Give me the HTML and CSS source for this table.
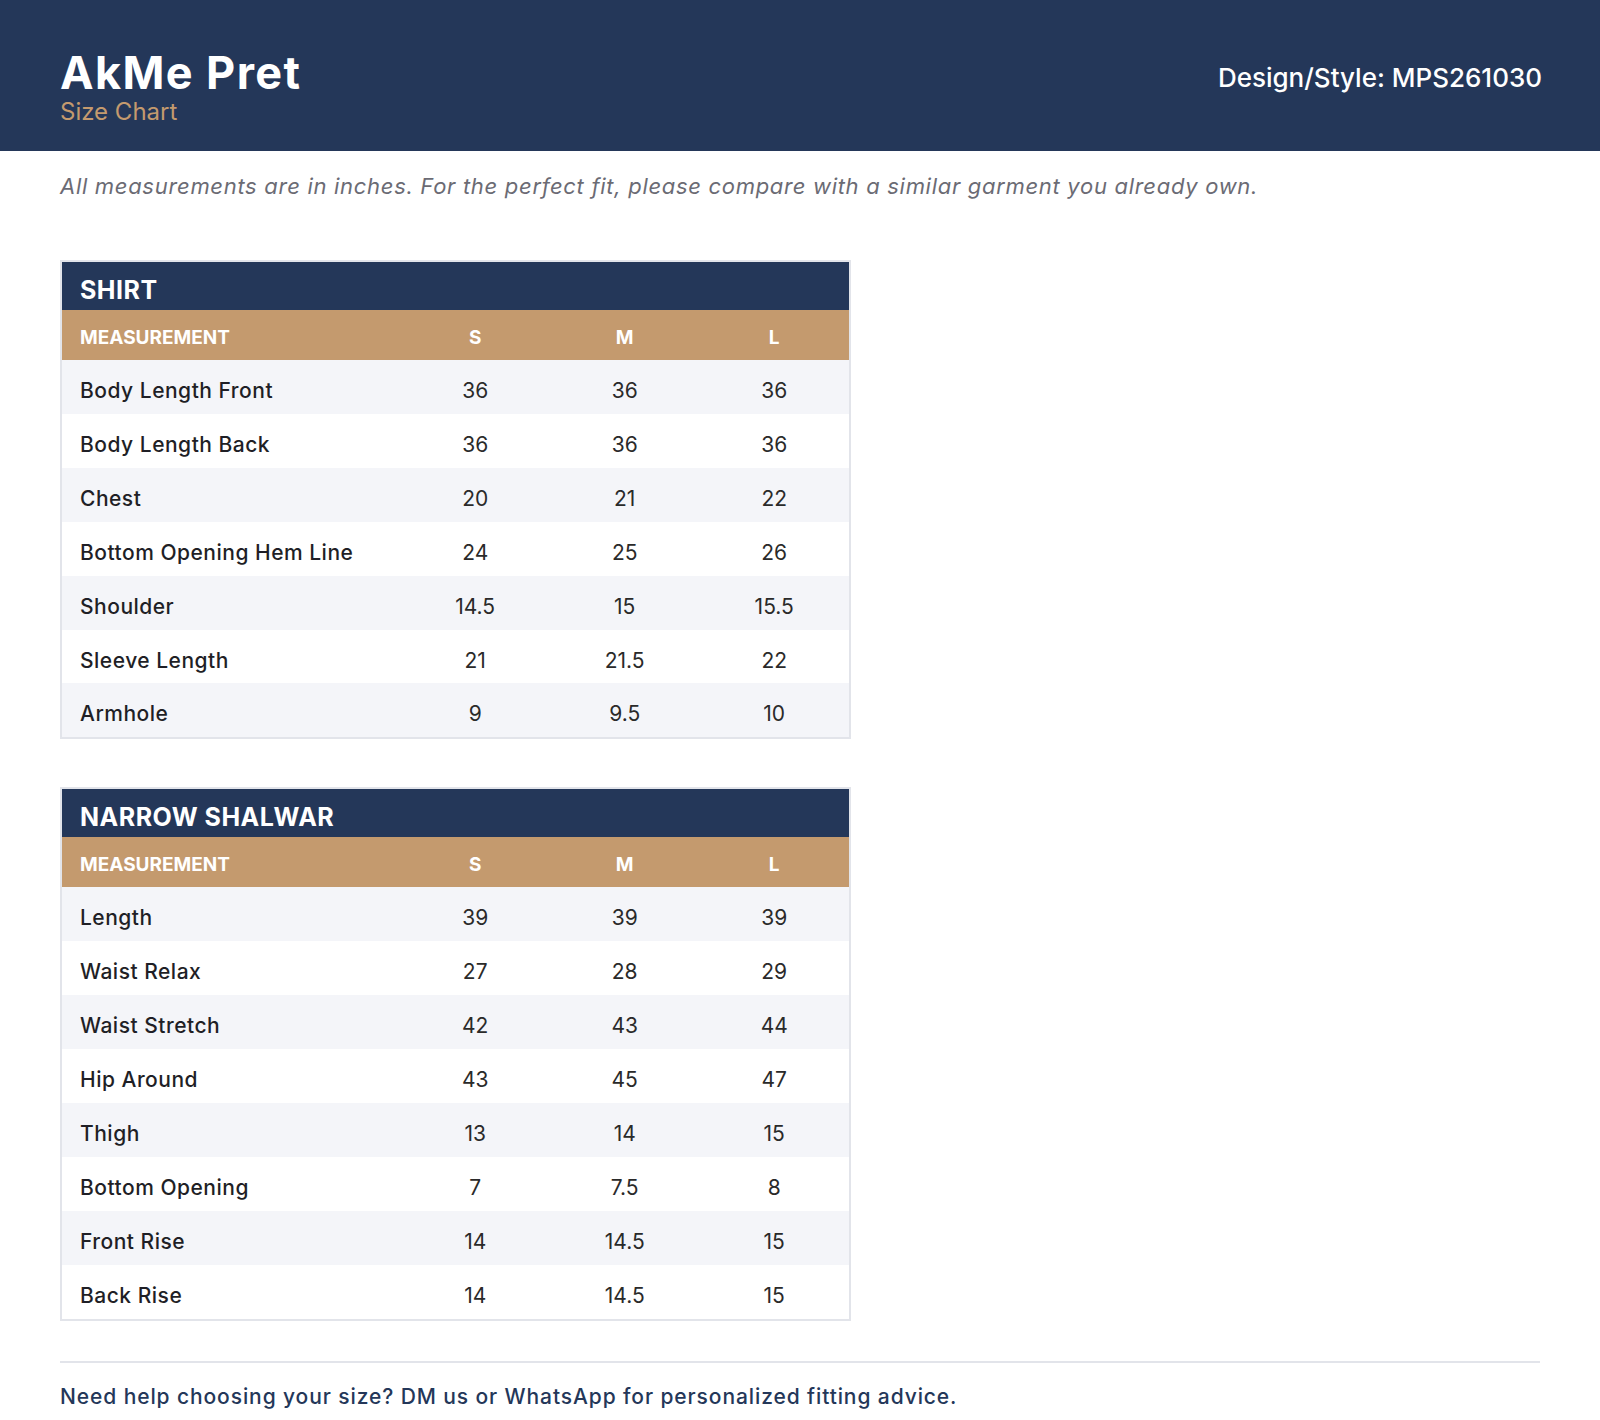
FILE: index.html
```html
<!DOCTYPE html>
<html lang="en">
<head>
<meta charset="utf-8">
<title>AkMe Pret – Size Chart</title>
<link rel="stylesheet" href="styles.css">
</head>
<body>
<header class="top">
  <div class="brand">
    <div class="brand-name">AkMe Pret</div>
    <div class="brand-sub">Size Chart</div>
  </div>
  <div class="design">Design/Style: MPS261030</div>
</header>
<main class="content">
  <p class="note">All measurements are in inches. For the perfect fit, please compare with a similar garment you already own.</p>

  <section class="chart">
    <div class="chart-title">SHIRT</div>
    <table class="grid">
      <thead>
        <tr><th class="label">MEASUREMENT</th><th>S</th><th>M</th><th>L</th></tr>
      </thead>
      <tbody>
        <tr><td class="label">Body Length Front</td><td>36</td><td>36</td><td>36</td></tr>
        <tr><td class="label">Body Length Back</td><td>36</td><td>36</td><td>36</td></tr>
        <tr><td class="label">Chest</td><td>20</td><td>21</td><td>22</td></tr>
        <tr><td class="label">Bottom Opening Hem Line</td><td>24</td><td>25</td><td>26</td></tr>
        <tr><td class="label">Shoulder</td><td>14.5</td><td>15</td><td>15.5</td></tr>
        <tr><td class="label">Sleeve Length</td><td>21</td><td>21.5</td><td>22</td></tr>
        <tr><td class="label">Armhole</td><td>9</td><td>9.5</td><td>10</td></tr>
      </tbody>
    </table>
  </section>

  <section class="chart">
    <div class="chart-title">NARROW SHALWAR</div>
    <table class="grid">
      <thead>
        <tr><th class="label">MEASUREMENT</th><th>S</th><th>M</th><th>L</th></tr>
      </thead>
      <tbody>
        <tr><td class="label">Length</td><td>39</td><td>39</td><td>39</td></tr>
        <tr><td class="label">Waist Relax</td><td>27</td><td>28</td><td>29</td></tr>
        <tr><td class="label">Waist Stretch</td><td>42</td><td>43</td><td>44</td></tr>
        <tr><td class="label">Hip Around</td><td>43</td><td>45</td><td>47</td></tr>
        <tr><td class="label">Thigh</td><td>13</td><td>14</td><td>15</td></tr>
        <tr><td class="label">Bottom Opening</td><td>7</td><td>7.5</td><td>8</td></tr>
        <tr><td class="label">Front Rise</td><td>14</td><td>14.5</td><td>15</td></tr>
        <tr><td class="label">Back Rise</td><td>14</td><td>14.5</td><td>15</td></tr>
      </tbody>
    </table>
  </section>

  <footer class="help">
    <p class="help-text">Need help choosing your size? DM us or WhatsApp for personalized fitting advice.</p>
  </footer>
</main>
</body>
</html>
```

FILE: styles.css
```css
* { box-sizing: border-box; }

html, body {
  margin: 0;
  padding: 0;
  background: #ffffff;
}

body {
  font-family: "Inter", "Noto Sans", "Liberation Sans", sans-serif;
  color: #222222;
}

.top {
  height: 151px;
  background: #243759;
  padding: 48px 60px 0;
  display: flex;
  justify-content: space-between;
  align-items: flex-start;
}

.brand-name {
  font-size: 45px;
  line-height: 50px;
  font-weight: 700;
  color: #ffffff;
  letter-spacing: 1.4px;
}

.brand-sub {
  font-size: 24px;
  line-height: 28px;
  font-weight: 400;
  color: #c49a6e;
}

.design {
  margin-top: 14px;
  margin-right: -2px;
  font-size: 26px;
  line-height: 32px;
  font-weight: 500;
  color: #ffffff;
}

.content {
  padding: 20px 60px 0;
}

.note {
  margin: 0 0 59px;
  font-size: 22px;
  line-height: 30px;
  font-style: italic;
  letter-spacing: 0.7px;
  color: #6b6b74;
}

.chart {
  width: 791px;
  border: 2px solid #e2e4ea;
  margin-bottom: 48px;
}

.chart-title {
  height: 48px;
  padding: 8px 18px 0;
  line-height: 40px;
  font-size: 25px;
  font-weight: 700;
  letter-spacing: 0.5px;
  color: #ffffff;
  background: #243759;
}

.grid {
  width: 100%;
  border-collapse: collapse;
  table-layout: fixed;
}

.grid th {
  width: 19%;
  height: 50px;
  padding: 5px 0 0;
  line-height: 45px;
  font-size: 19px;
  font-weight: 700;
  color: #ffffff;
  background: #c49a6e;
  text-align: center;
}

.grid th.label {
  width: 43%;
  padding-left: 18px;
  text-align: left;
}

.grid td {
  height: 53.9px;
  padding: 8px 0 0;
  line-height: 45.9px;
  font-size: 21px;
  font-weight: 400;
  color: #2a2a2a;
  text-align: center;
}

.grid td.label {
  padding-left: 18px;
  text-align: left;
  font-weight: 500;
  letter-spacing: 0.5px;
  color: #1f1f26;
}

.grid tbody tr:nth-child(odd) td {
  background: #f4f5f9;
}

.grid tbody tr:nth-child(even) td {
  background: #ffffff;
}

.help {
  margin-top: -8px;
  border-top: 2px solid #e2e4ea;
  padding-top: 19px;
}

.help-text {
  margin: 0;
  font-size: 21px;
  line-height: 30px;
  font-weight: 500;
  letter-spacing: 0.9px;
  color: #243759;
}
```
